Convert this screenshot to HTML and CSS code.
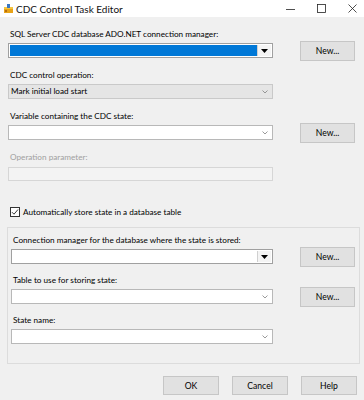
FILE: index.html
```html
<!DOCTYPE html>
<html lang="en">
<head>
    <meta charset="UTF-8">
    <meta name="viewport" content="width=device-width, initial-scale=1.0">
    <title>CDC Control Task Editor</title>
    <link rel="stylesheet" href="styles.css">
</head>
<body>
    <div class="titlebar">
        <svg class="app-icon" width="9" height="9" viewBox="0 0 9 9">
            <rect x="0" y="3" width="9" height="6" fill="#e8a317"/>
            <rect x="0" y="3" width="9" height="2" fill="#f5c542"/>
            <rect x="3" y="0" width="3" height="4" fill="#3a78c2"/>
            <rect x="1" y="6" width="2" height="2" fill="#b86e0c"/>
        </svg>
        <span class="title">CDC Control Task Editor</span>
        <div class="win-controls">
            <svg width="9" height="9" viewBox="0 0 9 9"><line x1="0" y1="5.5" x2="9" y2="5.5" stroke="#222" stroke-width="0.8"/></svg>
            <svg width="9" height="9" viewBox="0 0 9 9"><rect x="0.5" y="0.5" width="8" height="8" fill="none" stroke="#222" stroke-width="0.8"/></svg>
            <svg width="9" height="9" viewBox="0 0 9 9"><path d="M0.5 0.5 L8.5 8.5 M8.5 0.5 L0.5 8.5" stroke="#222" stroke-width="0.8"/></svg>
        </div>
    </div>

    <div class="content">
        <div class="fields">
            <div class="field">
                <div class="label">SQL Server CDC database ADO.NET connection manager:</div>
                <div class="row">
                    <div class="combo classic selected">
                        <span class="value"></span>
                        <span class="drop"><svg width="7" height="4" viewBox="0 0 7 4"><path d="M0 0 H7 L3.5 4 Z" fill="#000"/></svg></span>
                    </div>
                    <button class="btn">New...</button>
                </div>
            </div>

            <div class="field">
                <div class="label">CDC control operation:</div>
                <div class="row">
                    <div class="combo readonly">
                        <span class="value">Mark initial load start</span>
                        <span class="chevron"><svg width="6" height="4" viewBox="0 0 6 4"><path d="M0.5 0.5 L3 3 L5.5 0.5" fill="none" stroke="#808080" stroke-width="0.8"/></svg></span>
                    </div>
                </div>
            </div>

            <div class="field">
                <div class="label">Variable containing the CDC state:</div>
                <div class="row">
                    <div class="combo">
                        <span class="value"></span>
                        <span class="chevron"><svg width="6" height="4" viewBox="0 0 6 4"><path d="M0.5 0.5 L3 3 L5.5 0.5" fill="none" stroke="#808080" stroke-width="0.8"/></svg></span>
                    </div>
                    <button class="btn">New...</button>
                </div>
            </div>

            <div class="field disabled">
                <div class="label">Operation parameter:</div>
                <div class="row">
                    <div class="combo textbox"></div>
                </div>
            </div>
        </div>

        <label class="check-row">
            <span class="checkbox">
                <svg width="8" height="8" viewBox="0 0 8 8"><path d="M1 4.2 L3 6.2 L7 1.5" fill="none" stroke="#222" stroke-width="0.9"/></svg>
            </span>
            <span>Automatically store state in a database table</span>
        </label>

        <div class="group">
            <div class="field">
                <div class="label">Connection manager for the database where the state is stored:</div>
                <div class="row">
                    <div class="combo classic">
                        <span class="value"></span>
                        <span class="drop"><svg width="7" height="4" viewBox="0 0 7 4"><path d="M0 0 H7 L3.5 4 Z" fill="#000"/></svg></span>
                    </div>
                    <button class="btn">New...</button>
                </div>
            </div>

            <div class="field">
                <div class="label">Table to use for storing state:</div>
                <div class="row">
                    <div class="combo">
                        <span class="value"></span>
                        <span class="chevron"><svg width="6" height="4" viewBox="0 0 6 4"><path d="M0.5 0.5 L3 3 L5.5 0.5" fill="none" stroke="#808080" stroke-width="0.8"/></svg></span>
                    </div>
                    <button class="btn">New...</button>
                </div>
            </div>

            <div class="field">
                <div class="label">State name:</div>
                <div class="row">
                    <div class="combo">
                        <span class="value"></span>
                        <span class="chevron"><svg width="6" height="4" viewBox="0 0 6 4"><path d="M0.5 0.5 L3 3 L5.5 0.5" fill="none" stroke="#808080" stroke-width="0.8"/></svg></span>
                    </div>
                </div>
            </div>
        </div>

        <div class="footer">
            <button class="btn">OK</button>
            <button class="btn">Cancel</button>
            <button class="btn">Help</button>
        </div>
    </div>
</body>
</html>
```

FILE: styles.css
```css
body {
    font-family: 'Lato', 'Noto Sans', sans-serif;
    font-size: 8.2px;
    color: #000;
    background-color: #f0f0f0;
    margin: 0;
    padding: 0;
    width: 364px;
    height: 400px;
    overflow: hidden;
}
.titlebar {
    display: flex;
    align-items: center;
    height: 17px;
    background: #fff;
    padding-left: 4px;
}
.app-icon {
    margin-right: 3px;
}
.title {
    font-size: 10px;
    color: #111;
    flex-grow: 1;
}
.win-controls {
    display: flex;
    align-items: center;
    gap: 22px;
    padding-right: 7px;
}
.content {
    padding-top: 11px;
}
.fields {
    display: flex;
    flex-direction: column;
    gap: 9px;
    margin-left: 8px;
}
.field .label {
    height: 13px;
    line-height: 13px;
    padding-left: 2px;
    white-space: nowrap;
}
.field.disabled .label {
    color: #a0a0a0;
}
.row {
    display: flex;
    align-items: center;
    height: 19px;
    gap: 27px;
}
.combo {
    box-sizing: border-box;
    width: 265px;
    height: 15px;
    display: flex;
    align-items: center;
    background: #fff;
    border: 1px solid #b8b8b8;
}
.combo .value {
    flex-grow: 1;
    padding-left: 2px;
    line-height: 13px;
}
.combo .chevron {
    display: flex;
    width: 12px;
    justify-content: center;
    margin-right: 1px;
}
.combo.readonly {
    background: #e5e5e5;
    border-color: #c9c9c9;
}
.combo.textbox {
    background: #f3f3f3;
    border-color: #d6d6d6;
    height: 14px;
}
.combo.classic {
    border-color: #a0a0a0;
    padding: 1px;
}
.combo.classic .value {
    align-self: stretch;
}
.combo.selected .value {
    background: #0078d7;
}
.combo .drop {
    box-sizing: border-box;
    width: 14px;
    align-self: stretch;
    display: flex;
    align-items: center;
    justify-content: center;
    background: #f4f4f4;
    border-left: 1px solid #d0d0d0;
}
.btn {
    box-sizing: border-box;
    width: 55px;
    height: 20px;
    padding: 0;
    font-family: inherit;
    font-size: 8.6px;
    color: #000;
    background: #e1e1e1;
    border: 1px solid #c6c6c6;
}
.check-row {
    display: flex;
    align-items: center;
    gap: 3px;
    height: 13px;
    margin: 22px 0 0 10px;
}
.checkbox {
    box-sizing: border-box;
    width: 10px;
    height: 10px;
    display: flex;
    align-items: center;
    justify-content: center;
    background: #fff;
    border: 1px solid #333;
}
.group {
    display: flex;
    flex-direction: column;
    gap: 8px;
    margin: 9px 4px 0 7px;
    padding: 6px 0 17px 3px;
    border: 1px solid #dcdcdc;
}
.group .combo {
    width: 262px;
}
.footer {
    display: flex;
    justify-content: flex-end;
    gap: 13px;
    margin-top: 12px;
    padding-right: 7px;
}
.footer .btn {
    width: 56px;
    height: 19px;
}
```
